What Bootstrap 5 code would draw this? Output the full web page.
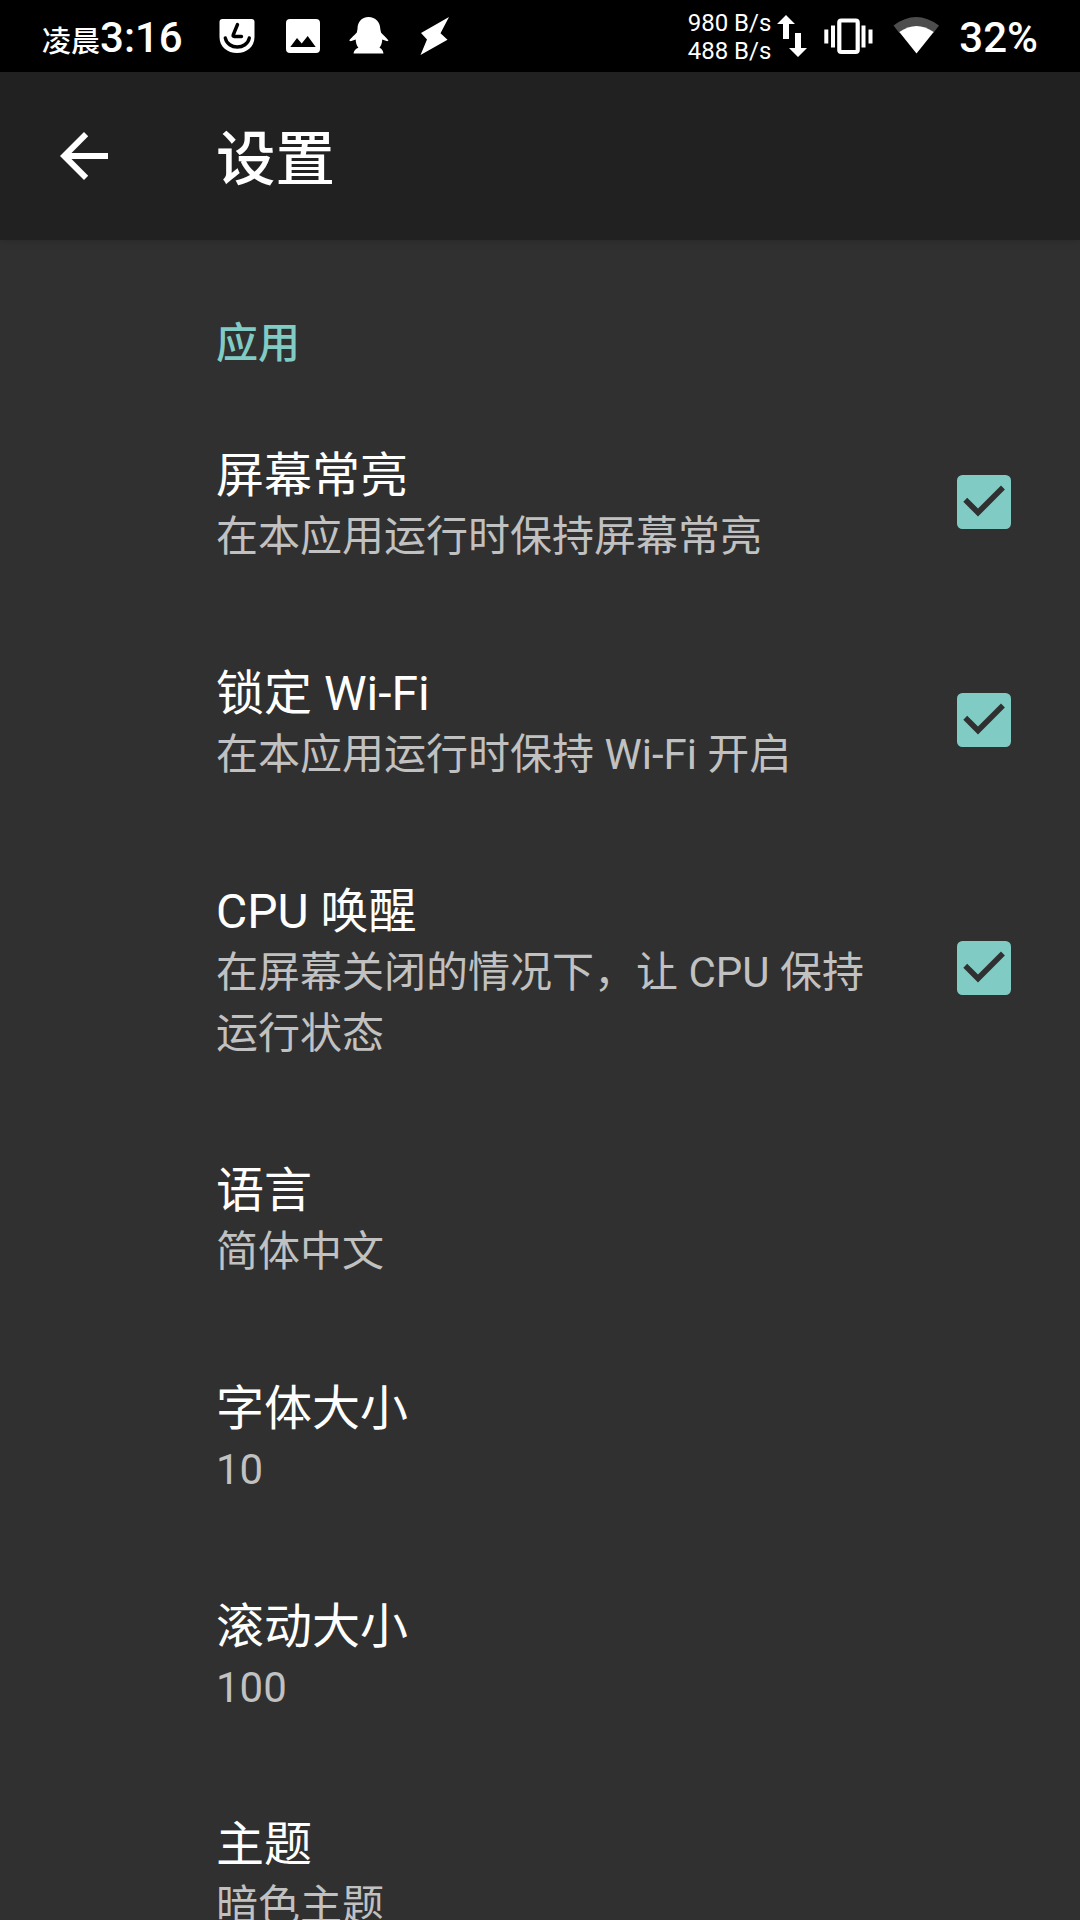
<!DOCTYPE html>
<html lang="zh-CN">
<head>
<meta charset="utf-8">
<meta name="viewport" content="width=device-width, initial-scale=1">
<title>设置</title>
<link href="https://cdn.jsdelivr.net/npm/bootstrap@5.3.0/dist/css/bootstrap.min.css" rel="stylesheet">
<style>
body{font-family:Roboto,"Noto Sans CJK SC",sans-serif;background:#303030;color:#fff;width:1080px;height:1920px}
svg{display:block;flex:none}
.status-bar{height:72px;background:#000;font-weight:500;padding-left:42px;padding-right:42px}
.clock-prefix{font-size:29px;line-height:72px}
.clock-time{font-size:42px;line-height:72px}
.speed{font-size:24px;font-weight:400;line-height:28px;padding-top:2px}
.notices{margin-left:36px}
.notices svg:nth-child(2){margin-left:30px}
.notices svg:nth-child(3){margin-left:28px;margin-top:-2px}
.notices svg:nth-child(4){margin-left:30px}
.clock{padding-top:7px}
.arrows{margin-left:6px}
.vibrate{margin-left:17px}
.wifi{margin-left:19px;margin-top:-2px}
.battery{margin-left:20px;padding-top:3px}
.app-bar{height:168px;background:#212121;padding-left:60px;box-shadow:0 1px 8px rgba(0,0,0,.16)}
.app-title{font-size:59.500px;line-height:72px;font-weight:500;margin-left:108px;padding-top:7px}
.pref-category{height:153px;padding:73px 0 0 216px;color:#80cbc4;font-size:42px;line-height:61px;font-weight:500}
.pref-item{padding:49px 69px 47px 216px}
.pref-title{font-size:48px;line-height:68px;height:64px}
.pref-summary{font-size:42px;line-height:61px;color:#c1c1c1;margin-bottom:-3px}
.pref-text{width:670px}
.pref-check{margin-top:-2px}
.pref-check-tall{margin-top:-4px}
</style>
</head>
<body class="overflow-hidden">
<div class="vh-100 overflow-hidden d-flex flex-column">
<header class="status-bar d-flex align-items-center justify-content-between flex-shrink-0">
  <div class="d-flex align-items-center">
    <div class="clock d-flex align-items-baseline"><span class="clock-prefix">凌晨</span><span class="clock-time">3:16</span></div>
    <div class="notices d-flex align-items-center">
      <svg width="36" height="36" viewBox="219 18 36 36"><path d="M222.500 19h29q3 0 3 3v15c0 10-8 16-17.500 16s-17.500-6-17.500-16V22q0-3 3-3z" fill="#fff"/><path d="M237.500 24.500l-4.300 10.500q-.5 1.500 1 1.500h7.300M225.300 38c2.500 12 21.500 12 24 0" fill="none" stroke="#000" stroke-width="3.400" stroke-linecap="round" stroke-linejoin="round"/></svg>
      <svg width="36" height="36" viewBox="285 18 36 36"><rect x="286" y="19" width="34" height="34" rx="4" fill="#fff"/><path d="M290.300 47l6.700-9 4.700 5.400 6-7.400 8 11z" fill="#000"/></svg>
      <svg width="40" height="40" viewBox="349 15 40 40"><path d="M368.500 17c-7 0-11 5-11 12l-.7 3.500c-1.500 2-6 5.500-7.600 8l1.500.7 5-1.700c0 3 1 6 2.700 8.300-2.400.8-4.400 2.500-4.900 5.700h30c-.5-3.200-2-4.900-4-5.700 1.700-2.300 2.700-5.300 2.700-8.300l5 1.700 1.300-.7c-1.700-2.500-6-6-7.500-8l-.7-3.500c0-7-4.800-12-11.800-12z" fill="#fff"/></svg>
      <svg width="32" height="40" viewBox="419 16 32 40"><path d="M449 17l-28 16 6 6.500-6.500 15.500 27-15.300-7-6.400z" fill="#fff"/></svg>
    </div>
  </div>
  <div class="d-flex align-items-center">
    <div class="speed text-end"><div>980 B/s</div><div>488 B/s</div></div>
    <svg class="arrows" width="30" height="44" viewBox="777 14 30 44"><path d="M786 15l9 9h-6v15h-6V24h-6zM798 57l-9-9h6V33h6v15h6z" fill="#fff"/></svg>
    <svg class="vibrate" width="50" height="38" viewBox="824 17 50 38"><g fill="#fff"><rect x="824.300" y="29.500" width="4" height="14"/><rect x="831" y="25.500" width="4" height="22"/><rect x="861.500" y="25.500" width="4" height="22"/><rect x="868.500" y="29.500" width="4" height="14"/></g><rect x="839.300" y="20.500" width="18.400" height="31.500" rx="2" fill="none" stroke="#fff" stroke-width="4.200"/></svg>
    <svg class="wifi" width="46" height="38" viewBox="893 16 46 38"><path d="M893.500 25.500Q916 8.500 939 25.500L933.300 33Q916.500 20 899.300 33z" fill="#4d4d4d"/><path d="M899.300 32Q916.500 20 933.700 32L916.500 53.500z" fill="#fff"/></svg>
    <span class="clock-time battery">32%</span>
  </div>
</header>
<nav class="app-bar d-flex align-items-center flex-shrink-0">
  <svg width="48" height="48" viewBox="0 0 48 48"><path d="M48 21H11.500L28.200 4.200 24 0 0 24l24 24 4.200-4.200L11.500 27H48z" fill="#fff"/></svg>
  <div class="app-title">设置</div>
</nav>
<main>
  <div class="pref-category">应用</div>
  <div class="pref-item d-flex align-items-center justify-content-between">
    <div class="pref-text"><div class="pref-title">屏幕常亮</div><div class="pref-summary">在本应用运行时保持屏幕常亮</div></div>
    <svg class="pref-check" width="54" height="54" viewBox="0 0 54 54"><rect width="54" height="54" rx="5.500" fill="#80cbc4"/><path d="M6.300 26.700L10.200 22.800 21 33.600 44 10.600 47.900 14.500 21 41.600z" fill="#303030"/></svg>
  </div>
  <div class="pref-item d-flex align-items-center justify-content-between">
    <div class="pref-text"><div class="pref-title">锁定 Wi-Fi</div><div class="pref-summary">在本应用运行时保持 Wi-Fi 开启</div></div>
    <svg class="pref-check" width="54" height="54" viewBox="0 0 54 54"><rect width="54" height="54" rx="5.500" fill="#80cbc4"/><path d="M6.300 26.700L10.200 22.800 21 33.600 44 10.600 47.900 14.500 21 41.600z" fill="#303030"/></svg>
  </div>
  <div class="pref-item d-flex align-items-center justify-content-between">
    <div class="pref-text"><div class="pref-title">CPU 唤醒</div><div class="pref-summary">在屏幕关闭的情况下，让 CPU 保持运行状态</div></div>
    <svg class="pref-check-tall" width="54" height="54" viewBox="0 0 54 54"><rect width="54" height="54" rx="5.500" fill="#80cbc4"/><path d="M6.300 26.700L10.200 22.800 21 33.600 44 10.600 47.900 14.500 21 41.600z" fill="#303030"/></svg>
  </div>
  <div class="pref-item"><div class="pref-title">语言</div><div class="pref-summary">简体中文</div></div>
  <div class="pref-item"><div class="pref-title">字体大小</div><div class="pref-summary">10</div></div>
  <div class="pref-item"><div class="pref-title">滚动大小</div><div class="pref-summary">100</div></div>
  <div class="pref-item"><div class="pref-title">主题</div><div class="pref-summary">暗色主题</div></div>
</main>
</div>
<script src="https://cdn.jsdelivr.net/npm/bootstrap@5.3.0/dist/js/bootstrap.bundle.min.js"></script>
</body>
</html>
